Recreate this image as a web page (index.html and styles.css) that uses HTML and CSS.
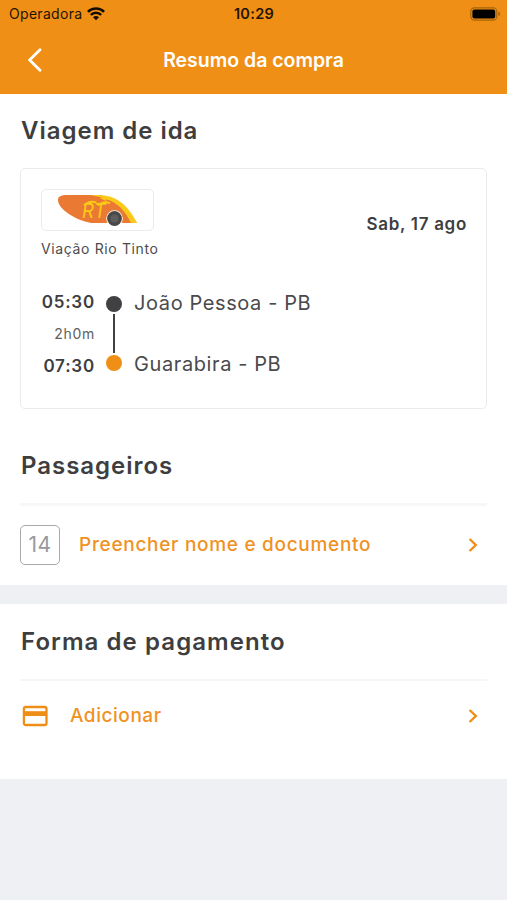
FILE: index.html
```html
<!DOCTYPE html>
<html lang="pt-BR">
<head>
<meta charset="utf-8">
<title>Resumo da compra</title>
<link rel="stylesheet" href="styles.css">
</head>
<body>
<header class="header">
  <div class="status">
    <div class="carrier">
      <span class="carrier-name">Operadora</span>
      <svg class="wifi" viewBox="0 0 18 14" width="18" height="14" fill="none" stroke="#140c02" stroke-width="2.5">
        <path d="M.9 4.8C5.4.3 12.6.3 17.1 4.8M3.8 7.8C6.8 4.9 11.2 4.9 14.2 7.8"/>
        <path d="M9 13.3 6 10.3C7.8 8.7 10.2 8.7 12 10.3Z" fill="#140c02" stroke="none"/>
      </svg>
    </div>
    <span class="clock">10:29</span>
    <svg class="battery" viewBox="0 0 31 14" width="31" height="14">
      <rect x=".8" y=".8" width="26" height="12.4" rx="3.6" fill="none" stroke="#a7640d" stroke-width="1.2"/>
      <rect x="2.4" y="2.4" width="22.8" height="9.2" rx="2" fill="#000"/>
      <path d="M28.4 4.8C30.7 5.4 30.7 8.6 28.4 9.2Z" fill="#a7640d"/>
    </svg>
  </div>
  <div class="nav">
    <svg class="back" viewBox="0 0 16 24" width="16" height="24" fill="none" stroke="#fff" stroke-width="2.8" stroke-linecap="round" stroke-linejoin="round">
      <path d="M14 1.8 3.6 12 14 22.2"/>
    </svg>
    <h1 class="title">Resumo da compra</h1>
    <span></span>
  </div>
</header>

<main>
  <section class="section trip">
    <h2 class="heading heading-trip">Viagem de ida</h2>
    <article class="card">
      <div class="card-top">
        <div class="operator">
          <div class="logo">
            <svg viewBox="0 0 81 33" width="81" height="33">
              <path d="M1 6C1 2.3 4 1.3 10 1.1L40 1C55 1.5 69 12 80 29L34 29C18 26 1 15 1 6Z" fill="#ea7a33"/>
              <path d="M34 1.3C57-1 70 9 80 29L74 29C69 18 60 7 48 5.2L50 7.2 43 4.2 45 3.4Z" fill="#fbc918"/>
              <text class="logo-text" transform="translate(25 24)" textLength="24" lengthAdjust="spacingAndGlyphs">RT</text>
              <path d="M27 11.5C31 7.5 36 7.2 39.5 8.6M41 11.5C44 8 49 7.4 53 9.3" fill="none" stroke="#fbc918" stroke-width="2"/>
              <circle cx="57.5" cy="24.5" r="8.3" fill="#fff"/>
              <circle cx="57.5" cy="24.5" r="7.4" fill="#484848"/>
              <circle cx="57.5" cy="24.5" r="4" fill="#5d5d5d"/>
            </svg>
          </div>
          <span class="operator-name">Viação Rio Tinto</span>
        </div>
        <span class="date">Sab, 17 ago</span>
      </div>
      <div class="route">
        <div class="times">
          <span class="time">05:30</span>
          <span class="duration">2h0m</span>
          <span class="time">07:30</span>
        </div>
        <div class="track">
          <span class="dot"></span>
          <span class="line"></span>
          <span class="dot dot-end"></span>
        </div>
        <div class="cities">
          <span class="city city-from">João Pessoa - PB</span>
          <span class="city city-to">Guarabira - PB</span>
        </div>
      </div>
    </article>
    <h2 class="heading heading-passengers">Passageiros</h2>
    <div class="row row-passenger">
      <span class="seat">14</span>
      <span class="action action-fill">Preencher nome e documento</span>
      <svg class="chevron" viewBox="0 0 10 16" width="10" height="16"><path d="M1.6 2 7.8 8 1.6 14"/></svg>
    </div>
  </section>

  <section class="section payment">
    <h2 class="heading heading-payment">Forma de pagamento</h2>
    <div class="row row-payment">
      <svg class="credit" viewBox="0 0 26 22" width="26" height="22">
        <rect x="1.9" y="2" width="22.6" height="18" rx="1.8" fill="none" stroke="#ef8e16" stroke-width="2.3"/>
        <path d="M1.9 6.2H24.5V11H1.9Z" fill="#ef8e16"/>
      </svg>
      <span class="action action-add">Adicionar</span>
      <svg class="chevron" viewBox="0 0 10 16" width="10" height="16"><path d="M1.6 2 7.8 8 1.6 14"/></svg>
    </div>
  </section>
</main>
</body>
</html>
```

FILE: styles.css
```css
* {
  box-sizing: border-box;
}

body {
  margin: 0;
  min-height: 900px;
  background: #eff0f4;
  color: #3e3e40;
  font-family: Inter, "Liberation Sans", sans-serif;
}

svg {
  display: block;
  flex: none;
}

span, h1, h2 {
  white-space: nowrap;
}

.header {
  height: 94px;
  background: #f08f15;
}

.status {
  display: grid;
  grid-template-columns: 1fr auto 1fr;
  align-items: center;
  height: 27px;
  padding: 0 6px 0 9px;
  color: #241502;
}

.carrier {
  display: flex;
  align-items: center;
  gap: 5px;
}

.carrier-name {
  font-size: 14px;
  line-height: 27px;
  letter-spacing: 0.3px;
}

.clock {
  margin-left: -2px;
  font-size: 14.5px;
  font-weight: 600;
  letter-spacing: 0.3px;
}

.battery {
  justify-self: end;
}

.nav {
  display: grid;
  grid-template-columns: 1fr auto 1fr;
  align-items: center;
  height: 66px;
  padding: 0 26px;
}

.title {
  margin: 0;
  color: #fff;
  font-size: 19.5px;
  font-weight: 600;
  letter-spacing: -0.02px;
}

.section {
  padding: 0 20px;
  background: #fff;
}

.trip {
  height: 491px;
}

.heading {
  margin: 0;
  padding-left: 1px;
  font-size: 24px;
  font-weight: 600;
  letter-spacing: 0.98px;
}

.heading-trip {
  height: 74px;
  line-height: 74px;
}

.heading-payment {
  letter-spacing: 1.07px;
}

.card {
  height: 241px;
  padding: 20px 19px 20px 20px;
  border: 1.5px solid #ebebed;
  border-radius: 5px;
}

.card-top {
  display: flex;
  justify-content: space-between;
}

.operator {
  display: flex;
  flex-direction: column;
}

.logo {
  display: flex;
  align-items: center;
  justify-content: center;
  width: 113px;
  height: 42px;
  border: 1.5px solid #ebebed;
  border-radius: 5px;
}

.logo-text {
  fill: #fbc918;
  font-size: 20px;
  font-style: italic;
  font-weight: 400;
}

.operator-name {
  line-height: 36px;
  font-size: 14px;
  letter-spacing: 0.63px;
  color: #4c4c4e;
}

.date {
  line-height: 70px;
  font-size: 17px;
  font-weight: 600;
  letter-spacing: 0.7px;
}

.route {
  display: flex;
  margin-top: 21px;
}

.times {
  display: flex;
  flex-direction: column;
  align-items: flex-end;
  width: 54px;
  margin-top: -2px;
}

.time {
  font-size: 17px;
  font-weight: 600;
  line-height: 32px;
  letter-spacing: 0.8px;
}

.duration {
  font-size: 14px;
  line-height: 32px;
  letter-spacing: 0.7px;
  color: #606062;
}

.track {
  display: flex;
  flex-direction: column;
  align-items: center;
  gap: 2px;
  width: 16px;
  margin-left: 11px;
  padding-top: 8px;
}

.dot {
  width: 16px;
  height: 16px;
  border-radius: 50%;
  background: #414143;
}

.dot-end {
  background: #f08f15;
}

.line {
  width: 2px;
  height: 39px;
  background: #414143;
}

.cities {
  display: flex;
  flex-direction: column;
  margin-top: -3px;
  margin-left: 12px;
}

.city {
  font-size: 20px;
  line-height: 36px;
  letter-spacing: 0.6px;
  color: #4a4a4c;
}

.city-to {
  margin-top: 25px;
}

.heading-passengers {
  height: 94px;
  padding-top: 20px;
  line-height: 73px;
}

.row {
  display: flex;
  align-items: center;
  padding-right: 9px;
}

.row-passenger {
  height: 82px;
  border-top: 3px solid #f7f7f8;
  padding-bottom: 2px;
}

.seat {
  width: 40px;
  height: 40px;
  border: 1.5px solid #a8a9ad;
  border-radius: 5px;
  font-size: 21px;
  line-height: 38px;
  text-align: center;
  letter-spacing: 0.5px;
  color: #98999d;
}

.action {
  font-size: 19px;
  font-weight: 500;
  letter-spacing: 0.7px;
  color: #ef9223;
}

.action-fill {
  margin-left: 19px;
}

.chevron {
  margin-left: auto;
  fill: none;
  stroke: #ef8e16;
  stroke-width: 2.4;
}

.payment {
  height: 175px;
  margin-top: 19px;
}

.heading-payment {
  height: 75px;
  line-height: 75px;
}

.row-payment {
  height: 73px;
  padding-bottom: 2px;
  border-top: 2px solid #f5f5f6;
}

.credit {
  margin-left: 2px;
}

.action-add {
  margin-left: 22px;
  letter-spacing: 0.55px;
}
```
